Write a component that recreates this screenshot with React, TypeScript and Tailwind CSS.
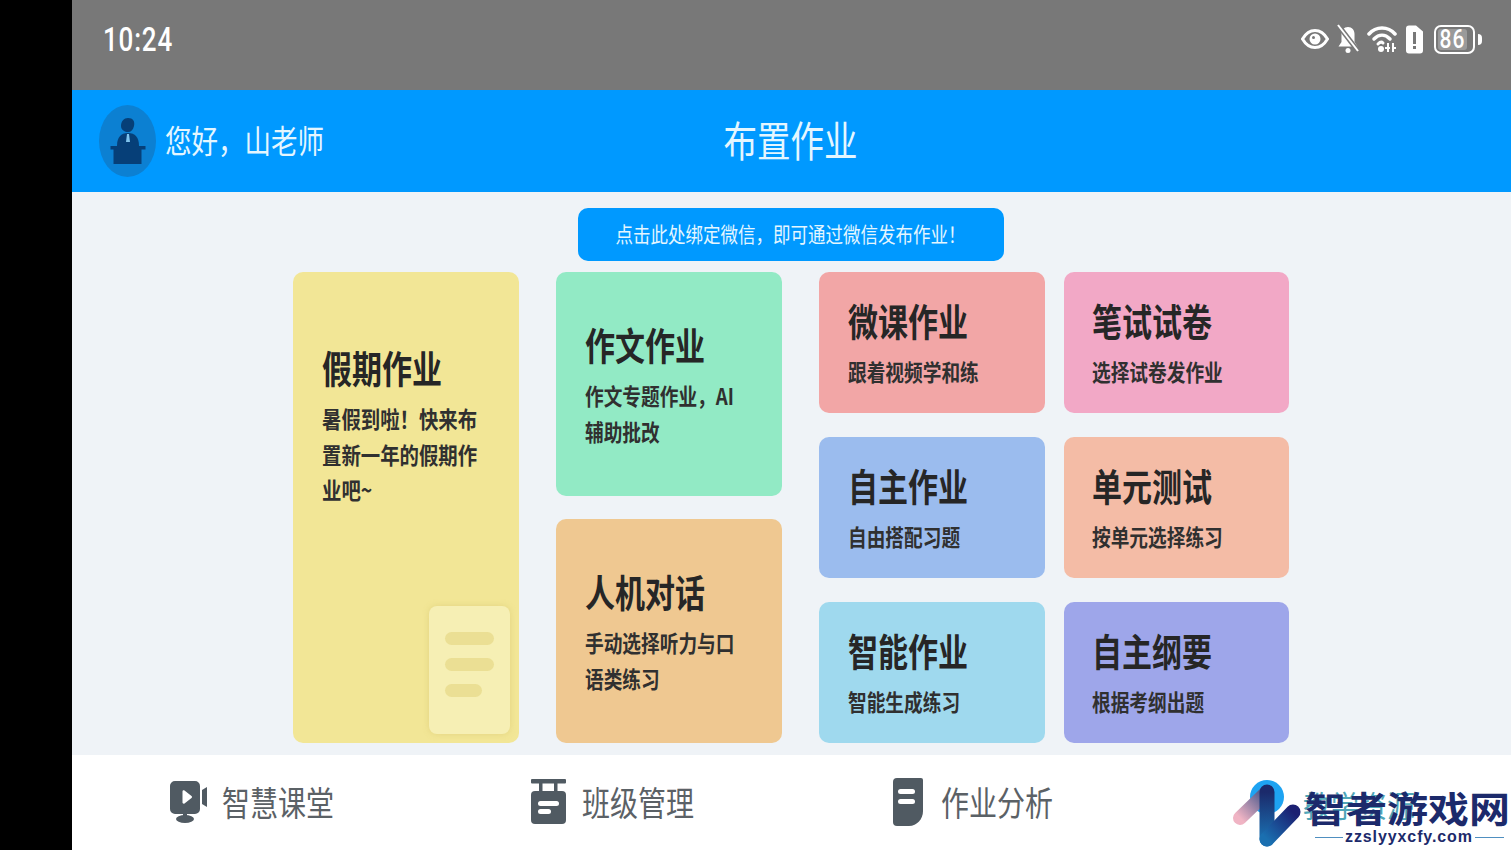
const cjk = "font-['Noto_Sans_CJK_SC','Noto_Sans',sans-serif]";

const column2 = [
  { title: "作文作业", lines: ["作文专题作业，AI", "辅助批改"], bg: "bg-[#92eac5]" },
  { title: "人机对话", lines: ["手动选择听力与口", "语类练习"], bg: "bg-[#efc891]" },
];

const column3 = [
  { title: "微课作业", lines: ["跟着视频学和练"], bg: "bg-[#f2a6a6]" },
  { title: "自主作业", lines: ["自由搭配习题"], bg: "bg-[#9bbcee]" },
  { title: "智能作业", lines: ["智能生成练习"], bg: "bg-[#9fd9ee]" },
];

const column4 = [
  { title: "笔试试卷", lines: ["选择试卷发作业"], bg: "bg-[#f2a8c6]" },
  { title: "单元测试", lines: ["按单元选择练习"], bg: "bg-[#f4bca6]" },
  { title: "自主纲要", lines: ["根据考纲出题"], bg: "bg-[#9ea6ea]" },
];

function CardText({ title, lines, large }: { title: string; lines: string[]; large?: boolean }) {
  return (
    <>
      <div className="h-10 text-[30px] leading-10 font-bold text-[#262626]">
        <span className="inline-block scale-y-[1.25]">{title}</span>
      </div>
      <div className={`mt-[13px] leading-[35.5px] font-bold text-[#303030] ${large ? "text-[19.4px]" : "text-[18.7px]"}`}>
        {lines.map((line) => (
          <div key={line}>
            <span className="inline-block scale-y-[1.2]">{line}</span>
          </div>
        ))}
      </div>
    </>
  );
}

function SmallCard({ title, lines, bg, tight }: { title: string; lines: string[]; bg: string; tight?: boolean }) {
  return (
    <div className={`h-[141px] rounded-[10px] pt-[28px] ${tight ? "pl-[28px]" : "pl-[29px]"} ${bg}`}>
      <CardText title={title} lines={lines} />
    </div>
  );
}

function MidCard({ title, lines, bg }: { title: string; lines: string[]; bg: string }) {
  return (
    <div className={`h-[224px] rounded-[10px] pl-[29px] pt-[52px] ${bg}`}>
      <CardText title={title} lines={lines} />
    </div>
  );
}

function StatusIcons() {
  return (
    <div className="flex items-center gap-[8px] text-white">
      <svg width="28" height="20" viewBox="0 0 28 20" fill="none">
        <path d="M1.500 10C5 4 9 1.500 14 1.500S23 4 26.500 10C23 16 19 18.500 14 18.500S5 16 1.500 10Z" stroke="currentColor" strokeWidth="3" />
        <circle cx="14" cy="10" r="5.500" fill="currentColor" />
        <circle cx="12.500" cy="8.500" r="1.500" fill="#787878" />
      </svg>
      <svg width="22" height="30" viewBox="0 0 22 30" fill="none">
        <path d="M11 3c4 0 6.500 3 6.500 7v8l3 4.500h-19l3-4.500v-8c0-4 2.500-7 6.500-7Z" fill="currentColor" />
        <circle cx="11" cy="26.500" r="2.500" fill="currentColor" />
        <path d="M1 1l20 26" stroke="#787878" strokeWidth="5" />
        <path d="M1 1l20 26" stroke="currentColor" strokeWidth="2" />
      </svg>
      <svg width="30" height="28" viewBox="0 0 30 28" fill="none">
        <path d="M2 9C9 1 21 1 28 9" stroke="currentColor" strokeWidth="3.500" strokeLinecap="round" />
        <path d="M7 14c5-5 11-5 16 0" stroke="currentColor" strokeWidth="3.500" strokeLinecap="round" />
        <path d="M11 19c2-2 4-2 5-1" stroke="currentColor" strokeWidth="3" strokeLinecap="round" />
        <circle cx="14" cy="24" r="3" fill="currentColor" />
        <path d="M21 18v9M26 18v9" stroke="currentColor" strokeWidth="2" />
        <path d="M18 23h5M25 23h4" stroke="currentColor" strokeWidth="2" />
      </svg>
      <svg width="19" height="29" viewBox="0 0 19 29">
        <path d="M4 0.500h7l7 6v19a3 3 0 0 1-3 3H4a3 3 0 0 1-3-3v-22a3 3 0 0 1 3-3Z" fill="currentColor" />
        <rect x="8" y="7" width="3" height="12" fill="#787878" />
        <rect x="8" y="21" width="3" height="3" fill="#787878" />
      </svg>
      <div className="ml-[2px] flex items-center gap-[3px]">
        <div className="relative h-[29px] w-[41px] rounded-[7px] border-2 border-white">
          <div className="absolute inset-y-[2px] left-[2px] w-[29px] rounded-[3px] bg-[#9a9a9a]" />
          <div className="absolute inset-0 flex items-center justify-center pr-[4px] font-['Roboto',sans-serif] text-[21px] leading-none font-medium">
            <span className="relative inline-block scale-y-[1.25] tracking-[1px]">86</span>
          </div>
        </div>
        <div className="h-[11px] w-[4px] rounded-r-sm bg-white" />
      </div>
    </div>
  );
}

function Logo() {
  return (
    <div className="absolute bottom-0 right-0 h-[72px] w-[279px]">
      <svg className="absolute left-0 top-0" width="72" height="72" viewBox="0 0 72 72" fill="none">
        <defs>
          <linearGradient id="fade" x1="8" y1="40" x2="35" y2="14" gradientUnits="userSpaceOnUse">
            <stop offset="0" stopColor="#f0b4c4" />
            <stop offset="1" stopColor="#3a4f86" />
          </linearGradient>
          <linearGradient id="bar" x1="35" y1="14" x2="35" y2="61" gradientUnits="userSpaceOnUse">
            <stop offset="0" stopColor="#1b2a6b" />
            <stop offset="1" stopColor="#1a6fb0" />
          </linearGradient>
          <linearGradient id="tail" x1="35" y1="61" x2="61" y2="34" gradientUnits="userSpaceOnUse">
            <stop offset="0" stopColor="#1a6fb0" />
            <stop offset="1" stopColor="#1b2072" />
          </linearGradient>
        </defs>
        <circle cx="35" cy="19" r="17" fill="#1ea3f2" />
        <path d="M8 40 35 14" stroke="url(#fade)" strokeWidth="14" strokeLinecap="round" />
        <path d="M35 14v47" stroke="url(#bar)" strokeWidth="15" strokeLinecap="round" />
        <path d="M35 61 61 34" stroke="url(#tail)" strokeWidth="15" strokeLinecap="round" />
      </svg>
      <div className={`absolute left-[73px] top-[9px] whitespace-nowrap text-[41px] leading-[40px] font-bold text-[#1c2a6b] ${cjk}`}>
        <span className="inline-block scale-y-[0.9]">智者游戏网</span>
      </div>
      <div className="absolute left-[83px] top-[49px] flex items-center gap-[2px]">
        <div className="h-px w-[28px] bg-[#4f8fc0]" />
        <div className="font-['Liberation_Sans',sans-serif] text-[16px] leading-[20px] font-bold tracking-[0.9px] text-[#1c2a6b]">
          zzslyyxcfy.com
        </div>
        <div className="h-px w-[29px] bg-[#4f8fc0]" />
      </div>
    </div>
  );
}

export default function App() {
  return (
    <div className={`flex h-[850px] w-[1511px] overflow-hidden bg-black ${cjk}`}>
      <div className="w-[72px] shrink-0 bg-black" />
      <div className="relative flex min-w-0 flex-1 flex-col">
        {/* status bar */}
        <div className="flex h-[90px] shrink-0 items-center justify-between bg-[#787878] pb-[12px] pl-[31px] pr-[29px] text-white">
          <span className="inline-block scale-y-[1.3] font-['Roboto',sans-serif] text-[26px] leading-none font-medium tracking-[0.8px]">10:24</span>
          <StatusIcons />
        </div>

        {/* header */}
        <div className="grid h-[102px] shrink-0 grid-cols-[1fr_auto_1fr] items-center bg-[#0099ff] pr-[2px] text-[#e4f6ff]">
          <div className="ml-[27px] flex items-center gap-[9px]">
            <div className="flex h-[72px] w-[57px] items-center justify-center rounded-[50%] bg-[#0c80d2]">
              <svg width="36" height="48" viewBox="0 0 36 48" fill="#063f78">
                <path d="M11 9c0-5 3-8 7-8 5 0 7 3 6 8-1 4-3 6-6 6s-7-2-7-6Z" />
                <path d="M7 29c0-9 4-13 11-13s11 4 11 13Z" />
                <rect x="0.500" y="29" width="35" height="3.500" />
                <rect x="3.500" y="32" width="28" height="15" />
                <path d="M17 17h2l1 8h-4Z" fill="#7fc4ee" />
              </svg>
            </div>
            <span className="inline-block -translate-y-px scale-y-[1.2] text-[26.500px] leading-none">您好，山老师</span>
          </div>
          <span className="inline-block -translate-y-[2px] scale-y-[1.25] text-[33.500px] leading-none">布置作业</span>
          <div />
        </div>

        {/* content */}
        <div className="flex min-h-0 flex-1 flex-col items-center bg-[#eff3f7] pr-[2px] pt-4">
          <div className="flex h-[53px] w-[426px] shrink-0 items-center justify-center rounded-[10px] bg-[#0099ff] text-[17.500px] text-[#e4f6ff]">
            <span className="inline-block scale-y-[1.2]">点击此处绑定微信，即可通过微信发布作业！</span>
          </div>
          <div className="mt-[11px] flex w-full pl-[221px]">
            <div className="relative h-[471px] w-[226px] rounded-[10px] bg-[#f2e696] pl-[29px] pt-[75px]">
              <CardText title="假期作业" lines={["暑假到啦！快来布", "置新一年的假期作", "业吧~"]} large />
              <div className="absolute bottom-[9px] right-[9px] flex h-[128px] w-[81px] flex-col gap-[13px] rounded-[8px] bg-[#f6efb4] pl-[16px] pt-[26px] shadow-[0_0_6px_rgba(200,180,90,0.35)]">
                <div className="h-[13px] w-[49px] rounded-full bg-[#ebdf94]" />
                <div className="h-[13px] w-[49px] rounded-full bg-[#ebdf94]" />
                <div className="h-[13px] w-[37px] rounded-full bg-[#ebdf94]" />
              </div>
            </div>
            <div className="ml-[37px] flex w-[226px] flex-col gap-[23px]">
              {column2.map((card) => (
                <MidCard key={card.title} {...card} />
              ))}
            </div>
            <div className="ml-[37px] flex w-[226px] flex-col gap-[24px]">
              {column3.map((card) => (
                <SmallCard key={card.title} {...card} />
              ))}
            </div>
            <div className="ml-[19px] flex w-[225px] flex-col gap-[24px]">
              {column4.map((card) => (
                <SmallCard key={card.title} {...card} tight />
              ))}
            </div>
          </div>
        </div>

        {/* bottom nav */}
        <div className="flex h-[95px] shrink-0 items-center bg-white pb-[2px] pl-[96px] text-[28px] leading-none text-[#5b6166]">
          <div className="flex w-[360px] items-center gap-[14px]">
            <svg className="w-10" width="40" height="42" viewBox="0 0 40 42" fill="#505a62">
              <path d="M7 0h20a5 5 0 0 1 5 5v23a5 5 0 0 1-5 5h-8v4h-4v-4H7a5 5 0 0 1-5-5V5a5 5 0 0 1 5-5Z" />
              <path d="M34 9l5-3v20l-5-3Z" />
              <ellipse cx="17" cy="38" rx="9" ry="4" />
              <path d="M14.500 10.500c0-1 1-1.500 2-1l7 5.500c.7.600.7 1.500 0 2l-7 5.500c-1 .5-2 0-2-1Z" fill="#ffffff" />
            </svg>
            <span className="inline-block scale-y-[1.2]">智慧课堂</span>
          </div>
          <div className="flex w-[359px] items-center gap-[14px]">
            <svg className="w-10" width="40" height="46" viewBox="0 0 40 46" fill="#505a62">
              <rect x="3" y="0" width="35" height="4.500" rx="1" />
              <rect x="11" y="4" width="3.500" height="9" />
              <rect x="26" y="4" width="3.500" height="9" />
              <rect x="3" y="12" width="35" height="33" rx="4" />
              <rect x="10" y="22" width="21" height="5" rx="2.500" fill="#ffffff" />
              <rect x="10" y="30" width="13" height="5" rx="2.500" fill="#ffffff" />
            </svg>
            <span className="inline-block scale-y-[1.2]">班级管理</span>
          </div>
          <div className="flex w-[362px] items-center gap-[14px]">
            <svg className="w-10" width="40" height="48" viewBox="0 0 40 48" fill="#505a62">
              <path d="M10 0h24a2 2 0 0 1 2 2v31c0 8-6 15-14 15H10a4 4 0 0 1-4-4V4a4 4 0 0 1 4-4Z" />
              <rect x="11" y="11" width="17" height="5" rx="2.500" fill="#ffffff" />
              <rect x="11" y="21" width="17" height="5" rx="2.500" fill="#ffffff" />
            </svg>
            <span className="inline-block scale-y-[1.2]">作业分析</span>
          </div>
          <div className="flex items-center gap-[14px] text-[#4fa6b8]">
            <div className="w-10" />
            <span className="inline-block translate-y-[2px] scale-y-[1.05]">教学资源</span>
          </div>
        </div>

        <Logo />
      </div>
    </div>
  );
}
